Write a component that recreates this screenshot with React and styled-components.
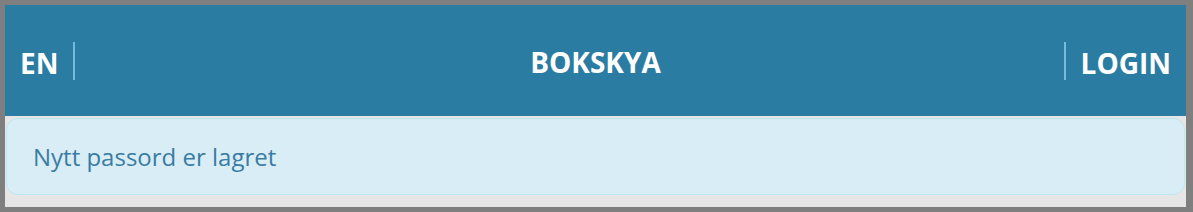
import React from "react";
import styled, { createGlobalStyle } from "styled-components";

const GlobalStyle = createGlobalStyle`
  html, body {
    margin: 0;
    padding: 0;
  }
  body {
    font-family: "Open Sans", "Liberation Sans", sans-serif;
  }
`;

const App = () => {
  return (
    <>
      <GlobalStyle />
      <Frame>
        <Header>
          <Side>
            <NavLink $divider="right">EN</NavLink>
          </Side>
          <Title>BOKSKYA</Title>
          <Side $align="end">
            <NavLink $divider="left">LOGIN</NavLink>
          </Side>
        </Header>
        <Alert>Nytt passord er lagret</Alert>
      </Frame>
    </>
  );
};

const Frame = styled.div`
  box-sizing: border-box;
  width: 1193px;
  height: 212px;
  border: 5px solid #7f7f7f;
  border-right-width: 7px;
  background: #e6e6e6;
  display: flex;
  flex-direction: column;
`;

const Header = styled.header`
  height: 111px;
  flex-shrink: 0;
  background: #2b7ca2;
  display: grid;
  grid-template-columns: 1fr auto 1fr;
  align-items: center;
  padding: 0 15px 0 15px;
`;

const Side = styled.div`
  display: flex;
  justify-content: ${(p) => (p.$align === "end" ? "flex-end" : "flex-start")};
`;

const NavLink = styled.a`
  color: #fff;
  font-weight: 700;
  font-size: 28px;
  line-height: 38px;
  height: 38px;
  padding-top: 2px;
  box-sizing: border-box;
  display: block;
  cursor: pointer;
  ${(p) =>
    p.$divider === "right"
      ? `border-right: 2px solid #74bbdc; padding-right: 15px;`
      : `border-left: 2px solid #74bbdc; padding-left: 15px;`}
`;

const Title = styled.h1`
  margin: 0;
  color: #fff;
  font-weight: 700;
  font-size: 28px;
  line-height: 38px;
  padding-top: 2px;
`;

const Alert = styled.div`
  margin: 2px 1px 0 1px;
  height: 77px;
  box-sizing: border-box;
  background: #d9edf7;
  border: 1px solid #bce8f1;
  border-radius: 12px;
  color: #3a7ca2;
  font-size: 24px;
  line-height: 34px;
  padding: 21px 26px 18px;
`;

export default App;
